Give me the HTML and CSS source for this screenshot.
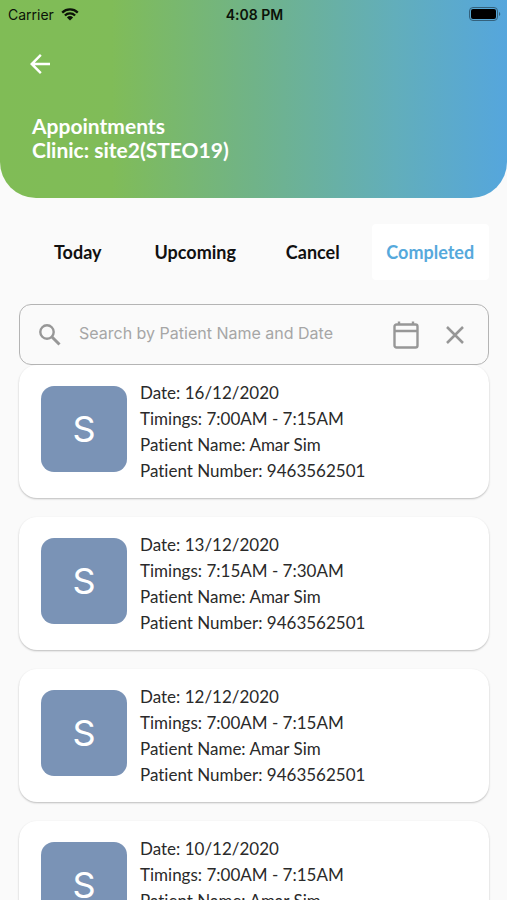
FILE: index.html
```html
<!DOCTYPE html>
<html lang="en">
<head>
  <meta charset="UTF-8">
  <meta name="viewport" content="width=device-width, initial-scale=1.0">
  <title>Appointments</title>
  <link rel="stylesheet" href="styles.css">
</head>
<body>

  <div class="app">
    <header class="header">
      <!-- Status bar -->
      <div class="status-bar">
        <div class="carrier">
          <span>Carrier</span>
          <svg width="18" height="13" viewBox="0 0 18 13" aria-hidden="true">
            <path d="M1.2 4.6a11.2 11.2 0 0 1 15.6 0M3.9 7.5a7.3 7.3 0 0 1 10.2 0" fill="none" stroke="#0b1208" stroke-width="2.3"/>
            <path d="M9 12.6L5.9 9.5a4.5 4.5 0 0 1 6.2 0z" fill="#0b1208"/>
          </svg>
        </div>
        <div class="clock">4:08 PM</div>
        <svg class="battery" width="32" height="14" viewBox="0 0 32 14" aria-hidden="true">
          <rect x="0.5" y="0.5" width="28" height="13" rx="3.5" fill="none" stroke="#34617c"/>
          <rect x="2" y="2" width="25" height="10" rx="2" fill="#000"/>
          <path d="M30 5v4a2.2 2.2 0 0 0 0-4z" fill="#34617c"/>
        </svg>
      </div>

      <button class="back" type="button" aria-label="Back">
        <svg width="20" height="20" viewBox="0 0 20 20" aria-hidden="true">
          <path d="M20 8.8H4.8l6.9-7L10 0 0 10l10 10 1.7-1.8-6.9-7H20z" fill="#fff"/>
        </svg>
      </button>

      <h1>Appointments<br>Clinic: site2(STEO19)</h1>
    </header>

    <nav class="tabs">
      <button type="button" class="tab">Today</button>
      <button type="button" class="tab">Upcoming</button>
      <button type="button" class="tab">Cancel</button>
      <button type="button" class="tab active">Completed</button>
    </nav>

    <!-- Search -->
    <div class="search">
      <svg width="22" height="22" viewBox="0 0 22 22" aria-hidden="true">
        <circle cx="8" cy="8" r="6.7" fill="none" stroke="#979797" stroke-width="2.4"/>
        <path d="M13 13l7.5 7.5" fill="none" stroke="#979797" stroke-width="3"/>
      </svg>
      <input type="text" class="search-input" aria-label="Search by Patient Name and Date" placeholder="Search by Patient Name and Date">
      <button type="button" class="icon-button" aria-label="Pick a date">
        <svg width="26" height="28" viewBox="0 0 26 28" aria-hidden="true">
          <rect x="1.5" y="3.5" width="23" height="23" rx="2" fill="none" stroke="#979797" stroke-width="2.4"/>
          <path d="M2 10h22M6 0.5V4M20 0.5V4" fill="none" stroke="#979797" stroke-width="2.4"/>
        </svg>
      </button>
      <button type="button" class="icon-button" aria-label="Clear">
        <svg width="18" height="18" viewBox="0 0 18 18" aria-hidden="true">
          <path d="M1 1l16 16M17 1L1 17" fill="none" stroke="#979797" stroke-width="2.5"/>
        </svg>
      </button>
    </div>

    <!-- Appointments -->
    <main class="list">
      <article class="card">
        <div class="avatar">S</div>
        <div class="details">
          <p>Date: 16/12/2020</p>
          <p>Timings: 7:00AM - 7:15AM</p>
          <p>Patient Name: Amar Sim</p>
          <p>Patient Number: 9463562501</p>
        </div>
      </article>

      <article class="card">
        <div class="avatar">S</div>
        <div class="details">
          <p>Date: 13/12/2020</p>
          <p>Timings: 7:15AM - 7:30AM</p>
          <p>Patient Name: Amar Sim</p>
          <p>Patient Number: 9463562501</p>
        </div>
      </article>

      <article class="card">
        <div class="avatar">S</div>
        <div class="details">
          <p>Date: 12/12/2020</p>
          <p>Timings: 7:00AM - 7:15AM</p>
          <p>Patient Name: Amar Sim</p>
          <p>Patient Number: 9463562501</p>
        </div>
      </article>

      <article class="card">
        <div class="avatar">S</div>
        <div class="details">
          <p>Date: 10/12/2020</p>
          <p>Timings: 7:00AM - 7:15AM</p>
          <p>Patient Name: Amar Sim</p>
          <p>Patient Number: 9463562501</p>
        </div>
      </article>
    </main>
  </div>

</body>
</html>
```

FILE: styles.css
```css
* {
  box-sizing: border-box;
}

body {
  margin: 0;
  background-color: #fafafa;
  color: #2a2a2a;
  font-family: "Century Gothic", Lato, sans-serif;
  font-variant-ligatures: none;
}

h1, p {
  margin: 0;
}

button {
  padding: 0;
  border: none;
  background: none;
  font-family: inherit;
  cursor: pointer;
}

svg {
  display: block;
  flex: none;
}

/* The list scrolls under the fixed top part */
.app {
  display: flex;
  flex-direction: column;
  height: 100vh;
}

.header {
  flex: none;
  padding-bottom: 36px;
  border-radius: 0 0 36px 36px;
  background: linear-gradient(to right, #80bc56 0%, #80bc58 22%, #70b388 50%, #62aebb 78%, #55a6dd 100%);
}

.status-bar {
  display: grid;
  grid-template-columns: 1fr auto 1fr;
  align-items: center;
  height: 28px;
  padding: 0 6px 0 8px;
  color: #0b1208;
  font-family: Inter, sans-serif;
  font-size: 14px;
}

.carrier {
  display: flex;
  align-items: center;
  gap: 7px;
}

.clock {
  font-weight: 600;
}

.battery {
  justify-self: end;
}

.back {
  display: block;
  margin: 26px 30px 0;
}

h1 {
  margin-top: 40px;
  padding: 0 32px;
  color: #fff;
  font-size: 21px;
  line-height: 24px;
}

.tabs {
  display: grid;
  grid-template-columns: repeat(4, 1fr);
  flex: none;
  margin: 26px 18px 0 19px;
}

.tab {
  height: 56px;
  border-radius: 4px;
  color: #111;
  font-size: 18px;
  font-weight: bold;
}

.tab.active {
  background-color: #fff;
  color: #56a9dc;
}

.search {
  display: flex;
  align-items: center;
  flex: none;
  height: 61px;
  margin: 24px 18px 0 19px;
  padding: 0 24px 0 19px;
  border: 1px solid #b4b4b4;
  border-radius: 12px;
}

.search-input {
  flex: 1;
  min-width: 0;
  margin-left: 18px;
  padding: 0 0 4px;
  border: none;
  outline: none;
  background: none;
  color: #222;
  font-family: Inter, sans-serif;
  font-size: 16px;
}

.search-input::placeholder {
  color: #a6a6a6;
}

.icon-button {
  margin-left: 27px;
}

.list {
  display: flex;
  flex-direction: column;
  flex: 1;
  gap: 19px;
  min-height: 0;
  padding: 0 18px 20px 19px;
  overflow-y: auto;
  scrollbar-width: none;
}

.card {
  display: flex;
  flex: none;
  gap: 13px;
  padding: 15px 22px 14px;
  border-radius: 18px;
  background-color: #fff;
  box-shadow: 0 1px 2px rgba(0, 0, 0, 0.25);
}

.avatar {
  display: flex;
  align-items: center;
  justify-content: center;
  flex: none;
  width: 86px;
  height: 86px;
  margin-top: 6px;
  border-radius: 13px;
  background-color: #7a93b6;
  color: #fff;
  font-family: Inter, sans-serif;
  font-size: 36px;
}

.details {
  font-size: 17px;
  line-height: 26px;
}
```
